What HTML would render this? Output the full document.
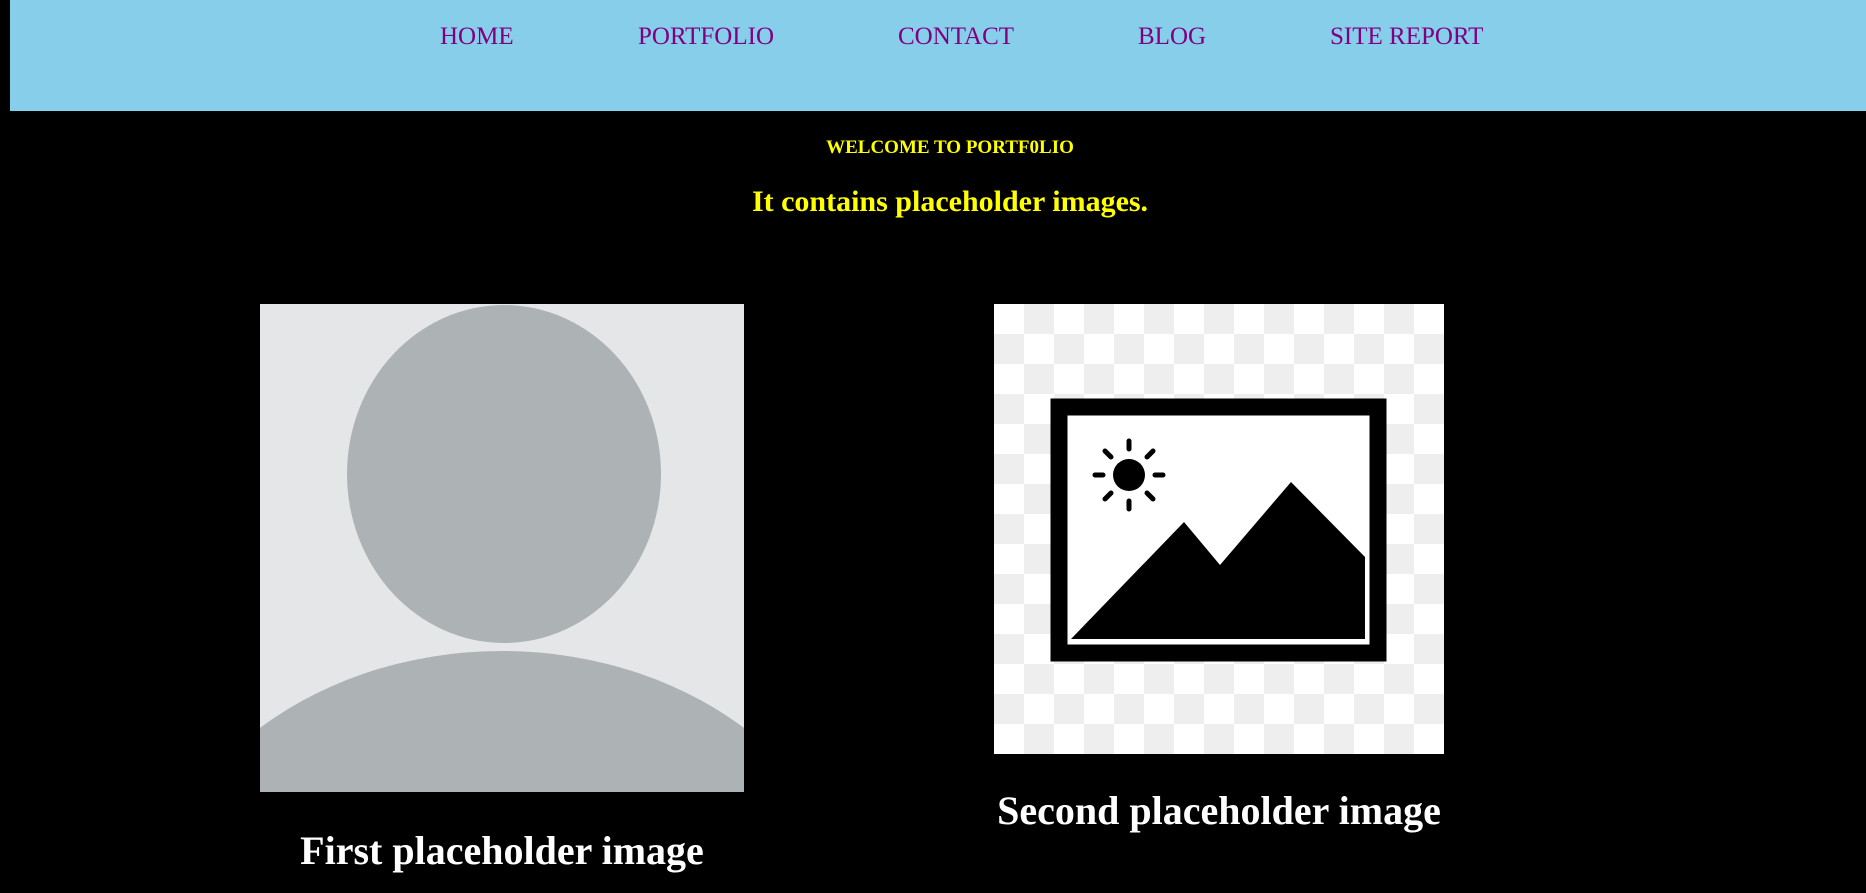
<!DOCTYPE html>
<html><head><meta charset="utf-8"><style>
html,body{margin:0;padding:0;background:#000;width:1866px;height:893px;overflow:hidden;font-family:"Liberation Serif",serif;}
.nav{position:absolute;left:10px;top:0;width:1856px;height:111px;background:#87ceeb;}
.nav a{position:absolute;top:23px;color:#800080;font-size:25px;text-decoration:none;white-space:nowrap;}
.t{position:absolute;white-space:nowrap;font-weight:bold;transform:translateX(-50%);}
</style></head><body>
<div class="nav">
<a style="left:430px">HOME</a>
<a style="left:628px">PORTFOLIO</a>
<a style="left:888px">CONTACT</a>
<a style="left:1128px">BLOG</a>
<a style="left:1320px">SITE REPORT</a>
</div>
<div class="t" style="left:950px;top:137px;font-size:19px;color:#ffff00">WELCOME TO PORTF0LIO</div>
<div class="t" style="left:950px;top:185px;font-size:30px;color:#ffff00">It contains placeholder images.</div>

<svg style="position:absolute;left:260px;top:304px" width="484" height="488" viewBox="0 0 484 488">
<rect width="484" height="488" fill="#e4e6e8"/>
<ellipse cx="244" cy="170" rx="157" ry="169" fill="#adb2b5"/>
<ellipse cx="242" cy="643" rx="360" ry="296" fill="#adb2b5"/>
</svg>

<svg style="position:absolute;left:994px;top:304px" width="450" height="450" viewBox="0 0 450 450">
<defs><pattern id="c" width="60" height="60" patternUnits="userSpaceOnUse">
<rect width="60" height="60" fill="#fff"/><rect x="30" width="30" height="30" fill="#eee"/><rect y="30" width="30" height="30" fill="#eee"/></pattern></defs>
<rect width="450" height="450" fill="url(#c)"/>
<rect x="65" y="103" width="319" height="246" fill="#fff"/>
<rect x="65" y="103" width="319" height="246" fill="none" stroke="#000" stroke-width="17"/>
<polygon points="77,335 190,218 226,261 297,178 371,253 371,335" fill="#000"/>
<circle cx="135" cy="171" r="16" fill="#000"/>
<g stroke="#000" stroke-width="5" stroke-linecap="round">
<line x1="135" y1="145" x2="135" y2="137"/><line x1="135" y1="197" x2="135" y2="205"/>
<line x1="109" y1="171" x2="101" y2="171"/><line x1="161" y1="171" x2="169" y2="171"/>
<line x1="117" y1="153" x2="111" y2="147"/><line x1="153" y1="153" x2="159" y2="147"/>
<line x1="117" y1="189" x2="111" y2="195"/><line x1="153" y1="189" x2="159" y2="195"/>
</g>
</svg>

<div class="t" style="left:502px;top:827px;font-size:40px;color:#fff">First placeholder image</div>
<div class="t" style="left:1219px;top:787px;font-size:40px;color:#fff">Second placeholder image</div>
</body></html>
